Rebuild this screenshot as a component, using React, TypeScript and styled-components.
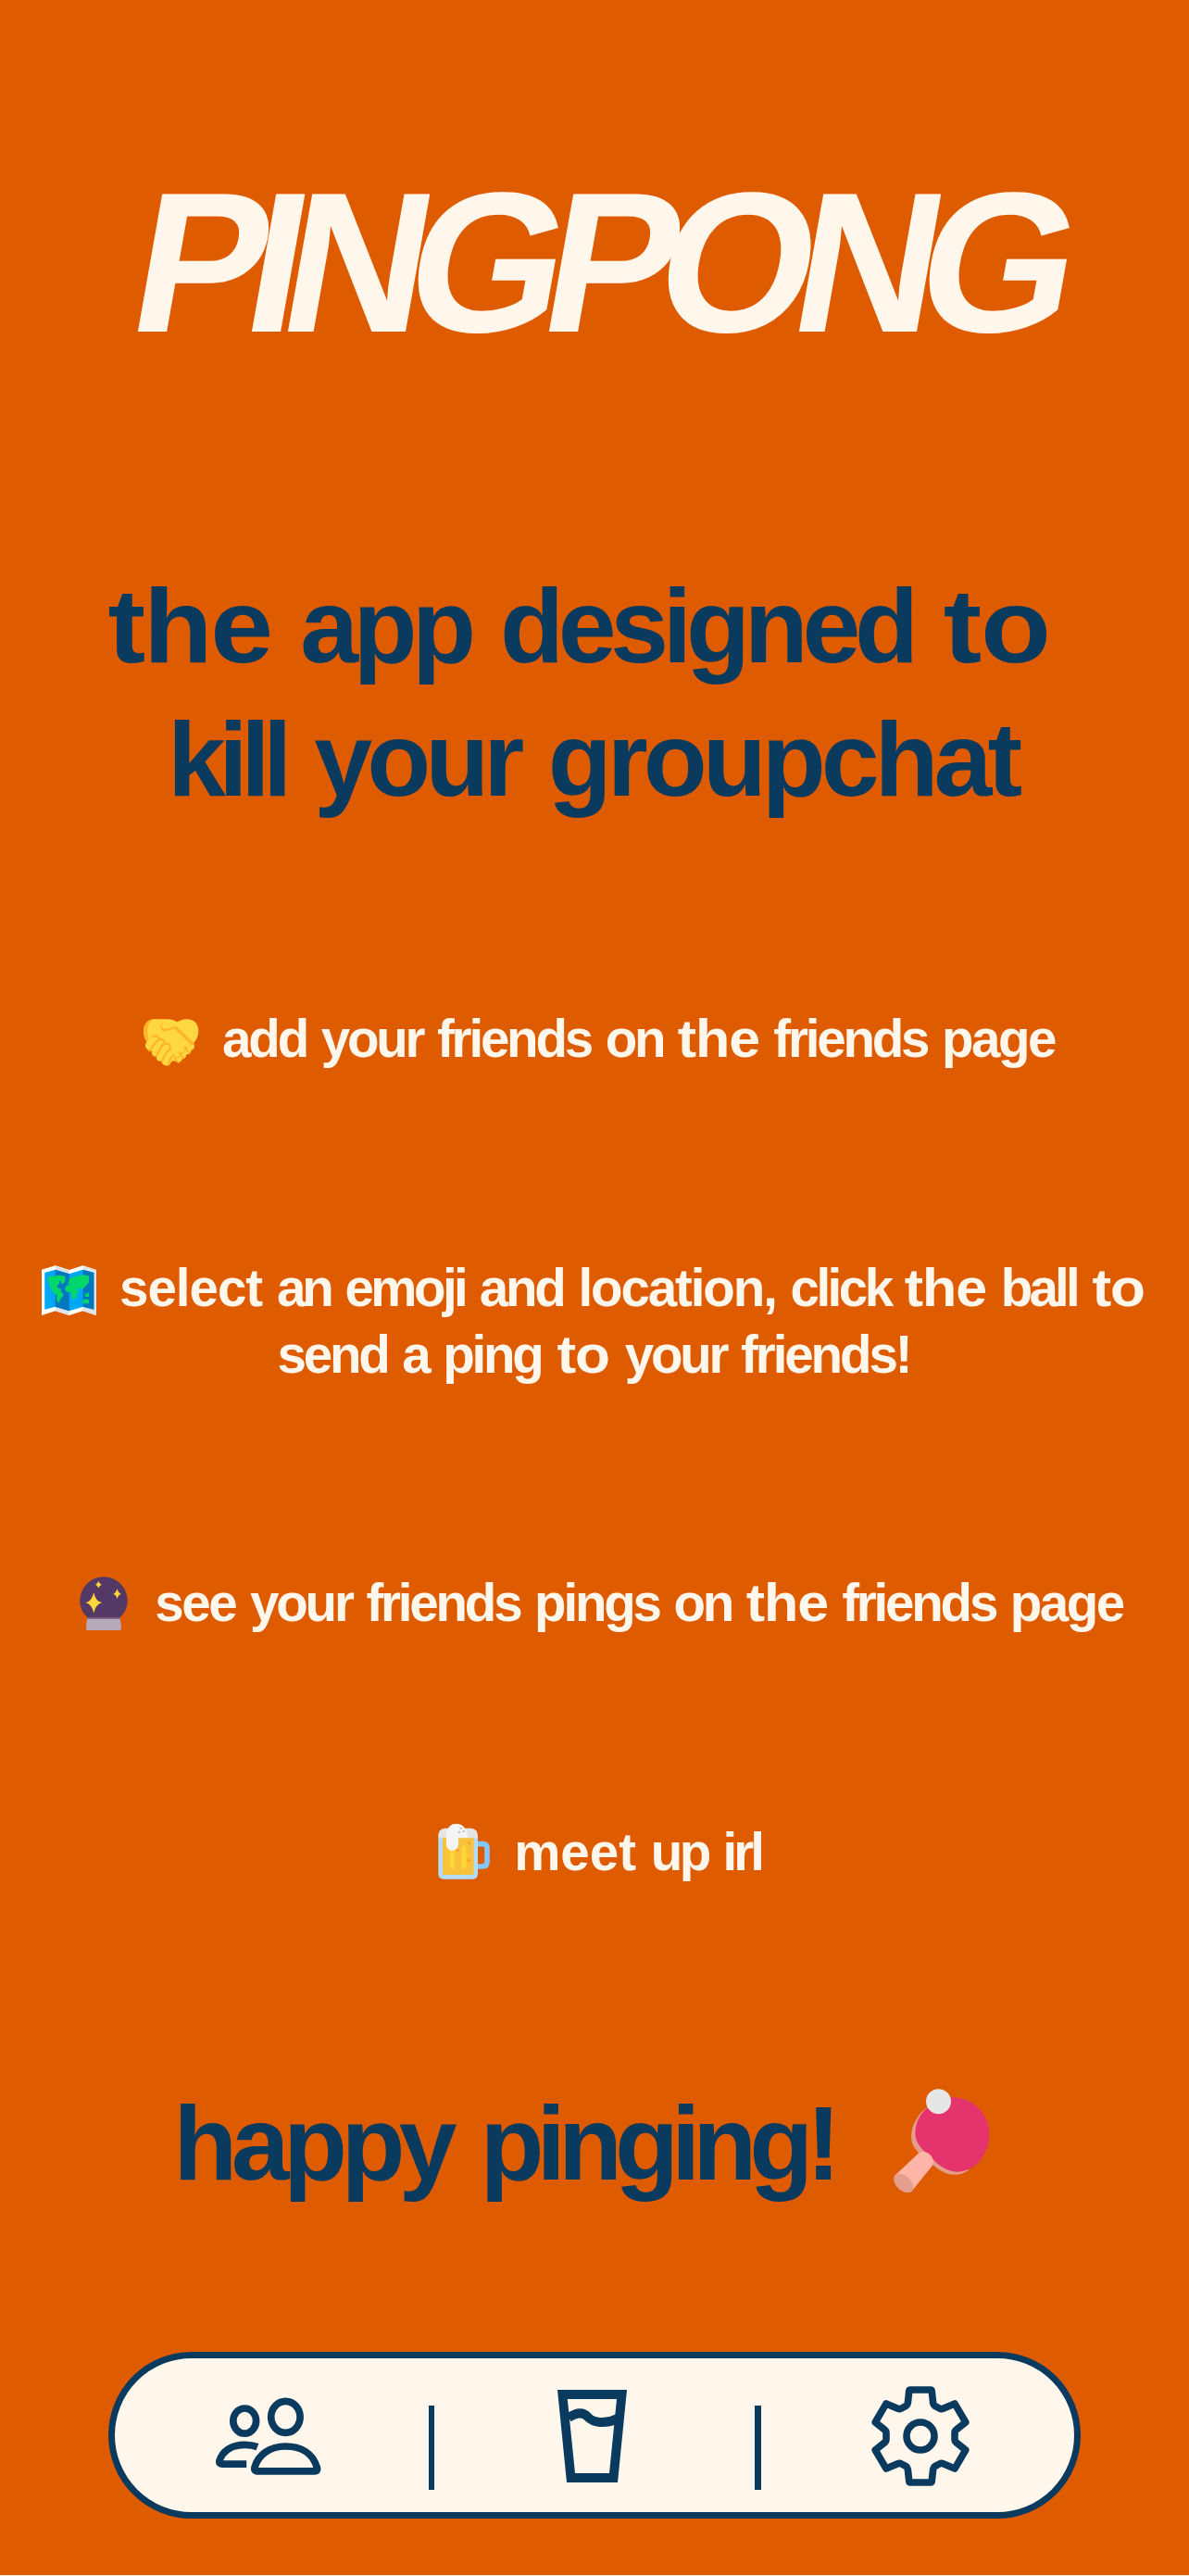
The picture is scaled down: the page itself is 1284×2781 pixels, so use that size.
import React from "react";
import styled, { createGlobalStyle } from "styled-components";

const orange = "#df5b00";
const navy = "#0a3a5e";
const cream = "#fff6ec";

const GlobalStyle = createGlobalStyle`
  body {
    margin: 0;
    background: ${orange};
    font-family: "Liberation Sans", Arial, sans-serif;
    font-weight: 700;
  }
`;

const Page = styled.main`
  width: 1284px;
  height: 2781px;
  box-sizing: border-box;
  padding-top: 163px;
  border-bottom: 1px solid ${cream};
  display: flex;
  flex-direction: column;
  overflow: hidden;
  background: ${orange};
`;

const Title = styled.h1`
  margin: 0;
  padding-left: 134.5px;
  font-size: 216px;
  line-height: 240px;
  font-weight: 700;
  letter-spacing: -21px;
  white-space: nowrap;
  transform: skewX(-10deg);
  transform-origin: 0 81%;
  color: ${cream};
`;

const Heading = styled.h2<{ $top: number }>`
  margin: ${(p) => p.$top}px 0 0;
  font-size: 113px;
  line-height: 144px;
  font-weight: 700;
  color: ${navy};
`;

const Step = styled.p<{ $top: number }>`
  margin: ${(p) => p.$top}px 0 0;
  font-size: 56.5px;
  line-height: 72px;
  color: ${cream};
`;

const Line = styled.span<{ $nudge?: number }>`
  display: flex;
  justify-content: center;
  white-space: pre;
  height: 1lh;
  margin-left: ${(p) => (p.$nudge ?? 0) * 2}px;
`;

const Word = styled.span<{ $track?: number; $stretch?: number }>`
  letter-spacing: ${(p) => p.$track ?? -3.2}px;
  ${(p) =>
    p.$stretch
      ? `transform: scaleX(${p.$stretch}); margin: 0 ${(p.$stretch - 1) * 0.65}em;`
      : ""}
`;

const Emoji = styled.svg<{ $w: number; $h: number; $drop?: number; $before?: number; $after?: number }>`
  flex: none;
  width: ${(p) => p.$w}px;
  height: ${(p) => p.$h}px;
  margin: ${(p) => p.$drop ?? 0}px ${(p) => p.$after ?? 0}px 0 ${(p) => p.$before ?? 0}px;
`;

const NavBar = styled.nav`
  width: 1050px;
  height: 180px;
  box-sizing: border-box;
  margin: 153px 0 0 117px;
  border: 7px solid ${navy};
  border-radius: 90px;
  background: ${cream};
  display: grid;
  grid-template-columns: 338.5px 6.5px 346px 6.5px 1fr;
  align-items: center;
`;

const NavButton = styled.button<{ $left?: number; $right?: number }>`
  border: 0;
  background: none;
  display: flex;
  justify-content: center;
  padding: 2px ${(p) => p.$right ?? 0}px 0 ${(p) => p.$left ?? 0}px;
`;

const Divider = styled.span`
  height: 91px;
  margin-top: 26px;
  background: ${navy};
`;

type Token = [string, number?, number?];

const Words = ({ items }: { items: Token[] }) => (
  <>
    {items.map(([text, track, stretch], i) => (
      <React.Fragment key={i}>
        {i > 0 ? <span> </span> : null}
        <Word $track={track} $stretch={stretch}>{text}</Word>
      </React.Fragment>
    ))}
  </>
);

const Handshake = () => (
  <Emoji $w={60} $h={51} $drop={13.5} $after={25} viewBox="30 29 180 153" aria-hidden>
    <path d="M65 30C45 29 31 45 30 68c0 15 4 27 13 37l12 22 45 43 30-6 65-60c10-13 15-28 12-46-4-18-18-29-38-28-12 1-20 4-30 9-10-5-19-9-31-9z" fill="#ffd740" />
    <path d="M65 30C42 32 30 49 30 70c0 14 5 26 13 36l5-7c-9-31-7-57 17-69z" fill="#ffb529" />
    <path d="M110 36c-16 0-22 9-21 19 6 11 24 4 32 0l16-1 58 55-3 11-63-60c-15 6-34 15-42 3-7-12 4-27 23-27z" fill="#ffb529" />
    <path d="M36 119c-2-14 15-28 27-34 9-2 15 2 16 10 11-4 18 3 18 10 11-1 19 6 18 14 10 1 15 10 13 17 13 6 9 14 1 20l-16 24c-17 3-26-7-23-14-12 2-20-5-18-15-12 0-18-8-14-18-9 0-18-4-22-14z" fill="#ffd740" />
    <g fill="none" stroke="#ffb529" strokeWidth="7" strokeLinecap="round">
      <path d="M50 132c8-9 14-28 29-34M72 148c8-11 11-30 26-39M90 165c7-14 14-34 28-39M111 175c4-12 8-25 17-29" />
      <path d="M60 87c12-5 19 0 20 9M82 95c11-1 16 5 16 12M101 108c11 0 16 6 15 13M165 122l13 11M147 139l13 15M133 153l11 14" />
    </g>
    <path d="M127 168l31-29 25-25 10-2c5 8-1 17-9 18 0 11-9 15-16 14 1 11-5 15-12 14-5 13-13 13-19 8z" fill="#ffd740" />
    <path d="M163 124l15 14M147 142l12 14M132 158l10 12" fill="none" stroke="#ffb529" strokeWidth="5" strokeLinecap="round" />
  </Emoji>
);

const WorldMap = () => (
  <Emoji $w={59.2} $h={54} $drop={10.5} $after={25} viewBox="61 78 145 162" preserveAspectRatio="none" aria-hidden>
    <path d="M61 92L97 79l37 14 36-14 36 14v147l-36-14-36 14-37-14-36 14z" fill="#fff" />
    <path d="M97 79l37 14v147l-37-14zM170 79l36 14v147l-36-14z" fill="#e0e3e5" />
    <path d="M69 102l28-10 37 14 36-14 29 10v119l-29-9-36 14-37-14-28 9z" fill="#00a7f4" />
    <path d="M97 92l37 14v120l-37-14zM170 92l29 10v119l-29-9z" fill="#0277bd" />
    <path d="M75 126c2-12 15-16 21-13 9-5 25-4 28 4 1 10-3 21-8 21-5 4-1-10-6-11-4 4 0 8-3 12-6 3-6 10-2 14 12-2 3 5 9 13 8 5 4 17-3 19-3 7-1 13-5 14-6-5-6-17-4-24-9-5-15-14-18-25-4-9-1-20-9-24z" fill="#00d768" />
    <path d="M130 140c2-18 12-26 22-26 8-4 20-6 33-2 5 7-1 12 1 19-2 8-6 7-7 14-8 5-6 13-14 9-6-3-8-5-10 2 7 6 1 10-1 16-2 8-1 15-9 16-10-7-1-21-8-23-13 2-15-8-13-16 1-8 11-10 15-7-1-9-4-4-9-2z" fill="#00d768" />
    <path d="M175 165l4 7 7-7v15h-10zM170 190q8-5 16 0v12h-16z" fill="#00d768" />
  </Emoji>
);

const CrystalBall = () => (
  <Emoji $w={52} $h={58.7} $drop={6.5} $after={29} viewBox="43 65 136 176" preserveAspectRatio="none" aria-hidden>
    <path d="M66 198c-14-13-22-32-22-54 0-43 30-78 67-78s67 35 67 78c0 21-8 41-22 54z" fill="#543865" />
    <path d="M64 199h93l4 33q0 7-7 7H67q-7 0-6-7z" fill="#b5a9ba" />
    <path d="M64 198h93v4H64z" fill="#76558b" />
    <path d="M83 116q4 28 23 34-18 5-23 34-5-29-23-34 18-6 23-34zM149 104q3 14 11 17-8 3-11 16-3-13-11-16 8-3 11-17zM96 80q3 9 9 11-6 3-9 11-3-8-8-11 5-2 8-11z" fill="#fdd63b" />
  </Emoji>
);

const Beer = () => (
  <Emoji $w={56} $h={60.3} $drop={5} $after={26} viewBox="72 57 168 181" aria-hidden>
    <path d="M199 122h18q14 0 14 14v44q0 15-14 15h-18" fill="none" stroke="#82c7ff" strokeWidth="17" />
    <path d="M73 101h128v117q0 18-18 18H91q-18 0-18-18z" fill="#b2ddfb" />
    <path d="M87 101h101v121H92q-5 0-5-6z" fill="#f9c23c" />
    <path d="M73 103V94q0-21 22-23h82q24 2 24 24v8z" fill="#e5e5e5" />
    <path d="M111 142h15v56q-7 12-15 0zM149 133q7-11 14 0v65q-7 12-14 0z" fill="#ffd735" />
    <path d="M99 101c-5-60 68-60 70 1h-31v22c0 26-39 26-39 0z" fill="#f4f4f4" />
    <g fill="#ff9e2c"><circle cx="172" cy="119" r="5" /><circle cx="136" cy="142" r="5" /><circle cx="172" cy="175" r="5" /></g>
    <g fill="#aaa"><circle cx="146" cy="71" r="3" /><circle cx="141" cy="84" r="3" /><circle cx="155" cy="82" r="3" /></g>
  </Emoji>
);

const Paddle = () => (
  <Emoji $w={103.7} $h={112.3} $drop={12.5} $before={65} viewBox="42 44 311 337" aria-hidden>
    <path d="M150 104c-44 34-63 91-43 126 12 23 35 39 58 56 38 37 78 49 121 21z" fill="#e59e8b" />
    <path d="M152 104c23-22 53-33 84-32 66 2 116 56 116 119 0 67-47 123-106 122-32-1-56-19-83-46-30-29-51-46-51-80 0-33 15-60 40-83z" fill="#e5336d" />
    <path d="M45 326l74-70c11-10 29-11 41 2 13 12 14 29 5 38l-66 82z" fill="#ffb5a7" />
    <ellipse cx="74" cy="350" rx="37" ry="24" transform="rotate(43 74 350)" fill="#e59e8b" />
    <circle cx="187.500" cy="85" r="40.500" fill="#e6e6e6" />
  </Emoji>
);

const Friends = () => (
  <svg width="114" height="84" viewBox="132.800 67.900 114 84" fill="none" stroke={navy} strokeWidth="7.700">
    <ellipse cx="164" cy="93.500" rx="12.400" ry="13.600" />
    <ellipse cx="208.200" cy="89.200" rx="15.700" ry="17" />
    <path d="M177.500 147.700H239.500Q243.500 147.700 242 143.500C237.500 128.500 225 120.900 208.300 120.900S179 129.500 174.800 143.500Q173.800 147.700 177.500 147.700Z" />
    <path d="M166 140H139.500Q136 140 136.800 136.500C140 126 150 119.200 164 119.200Q172 119.200 177.800 121.500" />
  </svg>
);

const Glass = () => (
  <svg width="75" height="100" viewBox="0 0 75 100">
    <path d="M0 0H75L65 100H10ZM10.800 10H64L56 90H19Z" fillRule="evenodd" fill={navy} />
    <path d="M12 30C21 24 28 24 33 29.500S51 38 65 31" fill="none" stroke={navy} strokeWidth="10" />
  </svg>
);

const Gear = () => (
  <svg width="106" height="108" viewBox="0 0 106 108" fill="none" stroke={navy} strokeWidth="7.600" strokeLinejoin="round">
    <path d="M42 4H64Q65 4 65.200 5L66.700 18.500Q67 20.500 68.500 21.300L73.500 24Q75.500 25.200 77.500 24.300L90 18.900L101.800 39L91.500 47.300Q90 48.500 90 50V58Q90 59.500 91.500 60.700L101.800 69L90 89.100L77.500 83.700Q75.500 82.800 73.500 84L68.500 86.700Q67 87.500 66.700 89.500L65.200 103Q65 104 64 104H42Q41 104 40.800 103L39.300 89.500Q39 87.500 37.500 86.700L32.500 84Q30.500 82.800 28.500 83.700L16 89.100L4.200 69L14.500 60.700Q16 59.500 16 58V50Q16 48.500 14.500 47.300L4.200 39L16 18.900L28.500 24.300Q30.500 25.200 32.500 24L37.500 21.300Q39 20.500 39.300 18.500L40.800 5Q41 4 42 4Z" />
    <circle cx="53" cy="54" r="15" />
  </svg>
);

export default function App() {
  return (
    <>
      <GlobalStyle />
      <Page>
        <Title>PINGPONG</Title>
        <Heading $top={201}>
          <Line $nudge={-15}>
            <Words items={[["the", -2, 1.08], ["app", -5.5], ["designed", -6.3], ["to", -1, 1.1]]} />
          </Line>
          <Line $nudge={-2}>
            <Words items={[["kill", -7.5], ["your", -6], ["groupchat", -5]]} />
          </Line>
        </Heading>
        <Step $top={194}>
          <Line $nudge={5}>
            <Handshake />
            <Words items={[["add"], ["your"], ["friends"], ["on"], ["the", -1, 1.08], ["friends"], ["page", -2.5]]} />
          </Line>
        </Step>
        <Step $top={197}>
          <Line $nudge={-1}>
            <WorldMap />
            <Words items={[["select", -1], ["an", -4], ["emoji", -3.6], ["and"], ["location,", -2.1], ["click", -3.5], ["the", -1, 1.08], ["ball", -3.8], ["to", -1, 1.1]]} />
          </Line>
          <Line $nudge={-1}>
            <Words items={[["send"], ["a"], ["ping"], ["to", -1, 1.1], ["your"], ["friends!", -3.1]]} />
          </Line>
        </Step>
        <Step $top={196}>
          <Line $nudge={7.5}>
            <CrystalBall />
            <Words items={[["see", -2.4], ["your"], ["friends"], ["pings"], ["on"], ["the", -1, 1.08], ["friends"], ["page", -2.5]]} />
          </Line>
        </Step>
        <Step $top={197}>
          <Line $nudge={5.5}>
            <Beer />
            <Words items={[["meet", 0], ["up", -3.5], ["irl", -4]]} />
          </Line>
        </Step>
        <Heading $top={206}>
          <Line $nudge={-14}>
            <Words items={[["happy", -6.6], ["pinging!", -8]]} />
            <Paddle />
          </Line>
        </Heading>
        <NavBar>
          <NavButton $right={7} aria-label="Friends"><Friends /></NavButton>
          <Divider />
          <NavButton $right={5} aria-label="Drinks"><Glass /></NavButton>
          <Divider />
          <NavButton $left={7} aria-label="Settings"><Gear /></NavButton>
        </NavBar>
      </Page>
    </>
  );
}
